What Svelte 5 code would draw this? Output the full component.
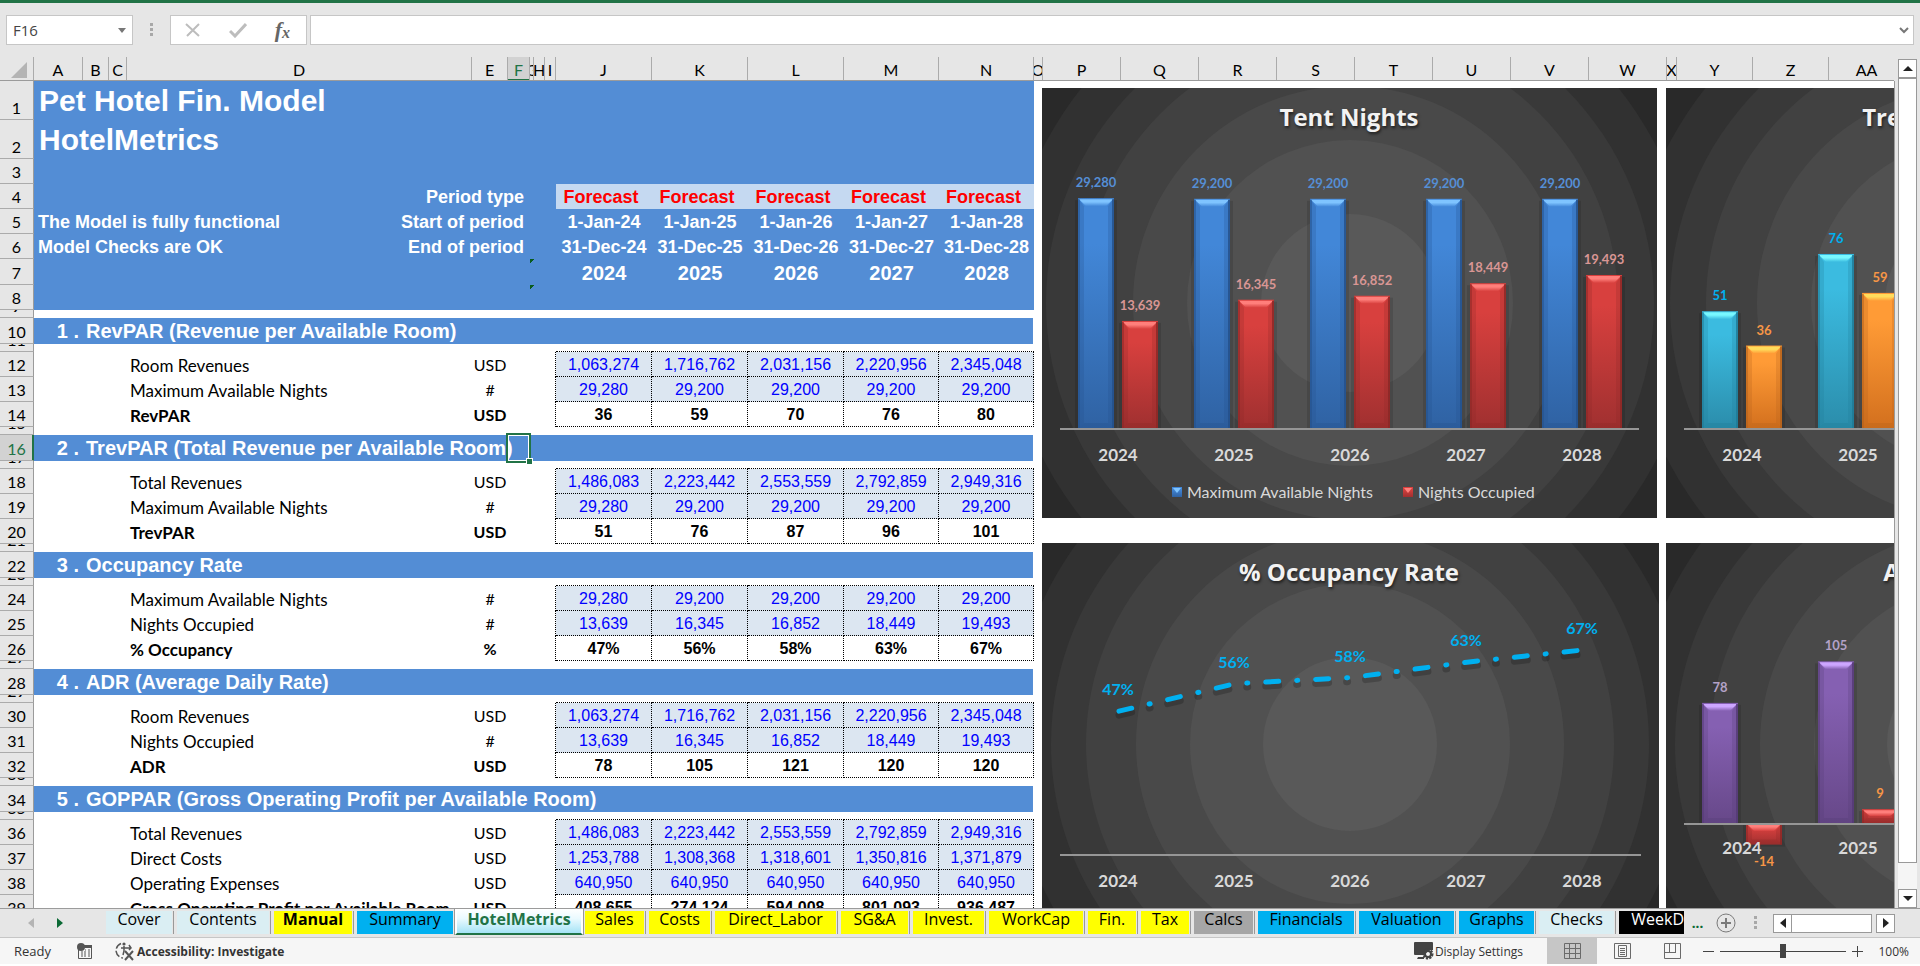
<script lang="ts">
    type Row = {
        n: number;
        kind: 'title' | 'plain' | 'year' | 'gap' | 'section' | 'line';
        label?: string;
        right?: string;
        unit?: string;
        values?: string[];
        style?: string;
        no?: number;
        flag?: boolean;
    };

    const columns: [string, number][] = [
        ['A', 49], ['B', 26], ['C', 18], ['D', 345], ['E', 36], ['F', 22], ['G', 4], ['H', 11], ['I', 11],
        ['J', 96], ['K', 96], ['L', 96], ['M', 95], ['N', 95], ['O', 9],
        ['P', 78], ['Q', 78], ['R', 78], ['S', 78], ['T', 78], ['U', 78], ['V', 78], ['W', 78],
        ['X', 10], ['Y', 76], ['Z', 76], ['AA', 76],
    ];

    const years = ['2024', '2025', '2026', '2027', '2028'];
    const totalRevenues = ['1,486,083', '2,223,442', '2,553,559', '2,792,859', '2,949,316'];
    const roomRevenues = ['1,063,274', '1,716,762', '2,031,156', '2,220,956', '2,345,048'];
    const available = ['29,280', '29,200', '29,200', '29,200', '29,200'];
    const occupied = ['13,639', '16,345', '16,852', '18,449', '19,493'];

    const sections = [
        {
            title: 'RevPAR (Revenue per Available Room)',
            lines: [
                ['Room Revenues', 'USD', roomRevenues],
                ['Maximum Available Nights', '#', available],
                ['RevPAR', 'USD', ['36', '59', '70', '76', '80']],
            ],
        },
        {
            title: 'TrevPAR (Total Revenue per Available Room)',
            lines: [
                ['Total Revenues', 'USD', totalRevenues],
                ['Maximum Available Nights', '#', available],
                ['TrevPAR', 'USD', ['51', '76', '87', '96', '101']],
            ],
        },
        {
            title: 'Occupancy Rate',
            lines: [
                ['Maximum Available Nights', '#', available],
                ['Nights Occupied', '#', occupied],
                ['% Occupancy', '%', ['47%', '56%', '58%', '63%', '67%']],
            ],
        },
        {
            title: 'ADR (Average Daily Rate)',
            lines: [
                ['Room Revenues', 'USD', roomRevenues],
                ['Nights Occupied', '#', occupied],
                ['ADR', 'USD', ['78', '105', '121', '120', '120']],
            ],
        },
        {
            title: 'GOPPAR (Gross Operating Profit per Available Room)',
            lines: [
                ['Total Revenues', 'USD', totalRevenues],
                ['Direct Costs', 'USD', ['1,253,788', '1,308,368', '1,318,601', '1,350,816', '1,371,879']],
                ['Operating Expenses', 'USD', ['640,950', '640,950', '640,950', '640,950', '640,950']],
                ['Gross Operating Profit per Available Room', 'USD', ['408,655', '274,124', '594,008', '801,093', '936,487']],
            ],
        },
    ] as { title: string; lines: [string, string, string[]][] }[];

    const rows: Row[] = [
        { n: 1, kind: 'title', label: 'Pet Hotel Fin. Model' },
        { n: 2, kind: 'title', label: 'HotelMetrics' },
        { n: 3, kind: 'plain' },
        { n: 4, kind: 'plain', right: 'Period type', values: Array(5).fill('Forecast'), style: 'forecast' },
        { n: 5, kind: 'plain', label: 'The Model is fully functional', right: 'Start of period', values: years.map((y) => '1-Jan-' + y.slice(2)) },
        { n: 6, kind: 'plain', label: 'Model Checks are OK', right: 'End of period', values: years.map((y) => '31-Dec-' + y.slice(2)) },
        { n: 7, kind: 'year', values: years, flag: true },
        { n: 8, kind: 'plain', flag: true },
        { n: 9, kind: 'gap' },
    ];

    let n = 10;
    sections.forEach((s, i) => {
        rows.push({ n: n++, kind: 'section', no: i + 1, label: s.title });
        rows.push({ n: n++, kind: 'gap', style: 'above' });
        s.lines.forEach(([label, unit, values], k) => {
            const total = k === s.lines.length - 1;
            rows.push({ n: n++, kind: 'line', label, unit, values, style: total ? 'total' : 'input' });
        });
        // the last section runs on below the window
        if (i < sections.length - 1) rows.push({ n: n++, kind: 'gap' });
    });

    // charts
    const palette = {
        blue: { hi: '#7fc4ff', top: '#4287d8', bottom: '#2f62a3', edge: '#24508a', text: '#558ed5' },
        red: { hi: '#ff7f7b', top: '#d8403e', bottom: '#a03030', edge: '#8a2826', text: '#d99694' },
        cyan: { hi: '#78f8ff', top: '#3bbbe0', bottom: '#2b8dab', edge: '#1f7a96', text: '#00b0f0' },
        orange: { hi: '#ffdc5c', top: '#ff9b36', bottom: '#d3701e', edge: '#b3611c', text: '#f79646' },
        purple: { hi: '#cda6ff', top: '#8560b2', bottom: '#674889', edge: '#543a75', text: '#b3a2c7' },
    };
    type Tone = keyof typeof palette;
    const shades = ['#313131', '#393939', '#414141', '#494949', '#515151', '#595959'];
    const num = (s: string) => parseFloat(s.replace(/,/g, ''));

    type Chart = {
        id: string; title: string; w: number; h: number; cy: number; base: number; scale: number; cat: number;
        rings: number[]; series: { tone: Tone; labelTone?: Tone; name: string; values: string[] }[]; legend?: boolean; line?: boolean;
    };
    const wide = [344, 304, 268, 217, 163, 89];
    const low = [339, 299, 264, 214, 160, 87];
    const charts: Chart[] = [
        {
            id: 'nights', title: 'Tent Nights', w: 615, h: 430, cy: 215, base: 340, scale: 0.00785, cat: 373, rings: wide, legend: true,
            series: [
                { tone: 'blue', name: 'Maximum Available Nights', values: available },
                { tone: 'red', name: 'Nights Occupied', values: occupied },
            ],
        },
        {
            id: 'trevpar', title: 'TrevPAR & RevPAR', w: 615, h: 430, cy: 215, base: 340, scale: 2.29, cat: 373, rings: wide,
            series: [
                { tone: 'cyan', name: 'TrevPAR', values: ['51', '76', '87', '96', '101'] },
                { tone: 'orange', name: 'RevPAR', values: ['36', '59', '70', '76', '80'] },
            ],
        },
        {
            id: 'occupancy', title: '% Occupancy Rate', w: 617, h: 403, cy: 201, base: 312, scale: 3.06, cat: 344, rings: low, line: true,
            series: [{ tone: 'cyan', name: '% Occupancy', values: ['47%', '56%', '58%', '63%', '67%'] }],
        },
        {
            id: 'adr', title: 'ADR & GOPPAR', w: 617, h: 403, cy: 201, base: 280, scale: 1.54, cat: 311, rings: low,
            series: [
                { tone: 'purple', name: 'ADR', values: ['78', '105', '121', '120', '120'] },
                { tone: 'red', labelTone: 'orange', name: 'GOPPAR', values: ['-14', '9', '20', '27', '32'] },
            ],
        },
    ];

    const tabs: [string, number, string][] = [
        ['Cover', 66, 'pale'], ['Contents', 92, 'pale'], ['Manual', 78, 'yellow strong'], ['Summary', 96, 'sky'],
        ['HotelMetrics', 128, 'active'], ['Sales', 59, 'yellow'], ['Costs', 61, 'yellow'], ['Direct_Labor', 121, 'yellow'],
        ['SG&A', 67, 'yellow'], ['Invest.', 71, 'yellow'], ['WorkCap', 94, 'yellow'], ['Fin.', 48, 'yellow'],
        ['Tax', 48, 'yellow'], ['Calcs', 59, 'gray'], ['Financials', 96, 'sky'], ['Valuation', 95, 'sky'],
        ['Graphs', 75, 'sky'], ['Checks', 75, 'pale'], ['WeekD', 65, 'black'],
    ];

    let zoom = 50;
</script>

{#snippet bar(tone: Tone, x: number, y: number, h: number)}
    {@const c = palette[tone]}
    {@const b = Math.min(8, h / 2)}
    <rect x={x - 3} y={y + 2} width="42" height={h} fill="#000" opacity="0.12" />
    <rect {x} {y} width="36" height={h} fill="url(#fill-{tone})" />
    <polygon points="{x},{y} {x + 6},{y + b} {x + 6},{y + h - 5} {x},{y + h}" fill={c.edge} opacity="0.25" />
    <polygon points="{x + 36},{y} {x + 30},{y + b} {x + 30},{y + h - 5} {x + 36},{y + h}" fill={c.edge} opacity="0.25" />
    <polygon points="{x},{y + h} {x + 6},{y + h - 5} {x + 30},{y + h - 5} {x + 36},{y + h}" fill={c.edge} opacity="0.3" />
    <polygon points="{x + 1},{y + 1} {x + 35},{y + 1} {x + 28},{y + b} {x + 8},{y + b}" fill="url(#hi-{tone})" />
    <path d="M{x + 1} {y + 1}V{y + h}" stroke={c.edge} stroke-width="2" opacity="0.5" />
    <path d="M{x + 35} {y + 1}V{y + h}" stroke={c.edge} stroke-width="2" opacity="0.8" />
{/snippet}

{#snippet plot(c: Chart)}
    <svg class="chart" width={c.w} height={c.h} viewBox="0 0 {c.w} {c.h}" role="img" aria-label={c.title}>
        <rect width={c.w} height={c.h} fill="#292929" />
        {#each c.rings as r, i}
            <circle cx={308} cy={c.cy} {r} fill={shades[i]} />
        {/each}
        <text class="chart-title" x="307" y="38">{c.title}</text>
        {#if c.line}
            {@const points = c.series[0].values.map((v, i) => `${77 + i * 116},${c.base - num(v) * c.scale}`).join(' ')}
            <path d="M18 {c.base}H599" stroke="#969696" stroke-width="2" />
            <polyline {points} class="trend shadow" />
            <polyline {points} class="trend" />
            {#each c.series[0].values as v, i}
                <text class="percent" x={76 + i * 116} y={c.base - num(v) * c.scale - 16}>{v}</text>
            {/each}
        {:else}
            {#each c.series as s, k}
                {#each s.values as v, i}
                    {@const size = Math.abs(num(v) * c.scale)}
                    {@render bar(s.tone, 36 + k * 44 + i * 116, num(v) < 0 ? c.base : c.base - size, size)}
                {/each}
            {/each}
            <path d="M18 {c.base + 1}H597" stroke="#969696" stroke-width="2" />
            {#each c.series as s, k}
                {#each s.values as v, i}
                    {@const value = num(v)}
                    <text
                        class="value"
                        x={54 + k * 44 + i * 116}
                        y={value < 0 ? c.base - value * c.scale + 21 : c.base - value * c.scale - 11}
                        fill={palette[s.labelTone ?? s.tone].text}>{v}</text>
                {/each}
            {/each}
        {/if}
        {#each years as year, i}
            <text class="category" x={76 + i * 116} y={c.cat}>{year}</text>
        {/each}
        {#if c.legend}
            {#each c.series as s, k}
                {@const x = k ? 361 : 130}
                <rect {x} y="399" width="10" height="10" fill="url(#fill-{s.tone})" />
                <polygon points="{x + 1},400 {x + 9},400 {x + 5},405" fill={palette[s.tone].hi} />
                <text class="legend" x={x + 15} y="410">{s.name}</text>
            {/each}
        {/if}
    </svg>
{/snippet}

<svg class="defs" width="0" height="0" aria-hidden="true">
    <defs>
        {#each Object.entries(palette) as [name, c]}
            <linearGradient id="fill-{name}" x1="0" y1="0" x2="0" y2="1">
                <stop offset="0.2" stop-color={c.top} />
                <stop offset="1" stop-color={c.bottom} />
            </linearGradient>
            <linearGradient id="hi-{name}" x1="0" y1="0" x2="0" y2="1">
                <stop offset="0.4" stop-color={c.hi} />
                <stop offset="1" stop-color={c.top} />
            </linearGradient>
        {/each}
    </defs>
</svg>

<div class="window">
    <div class="formula-bar">
        <div class="name-box">
            <input type="text" value="F16" aria-label="Name box" />
            <button type="button" aria-label="Show names">
                <svg width="8" height="5" viewBox="0 0 8 5"><path d="M0 0h8L4 5z" fill="#777" /></svg>
            </button>
        </div>
        <svg class="grip" width="4" height="14" viewBox="0 0 4 14"><path d="M0 0h3v3H0zM0 5h3v3H0zM0 10h3v3H0z" fill="#a8a8a8" /></svg>
        <div class="actions">
            <button type="button" aria-label="Cancel">
                <svg width="16" height="16" viewBox="0 0 16 16"><path d="M1 2l13 12M14 2L2 14" stroke="#bdbdbd" stroke-width="2" fill="none" /></svg>
            </button>
            <button type="button" aria-label="Enter">
                <svg width="18" height="16" viewBox="0 0 18 16"><path d="M1 9l5 5L17 2" stroke="#bdbdbd" stroke-width="3" fill="none" /></svg>
            </button>
            <button type="button" class="fx" aria-label="Insert function">f<small>x</small></button>
        </div>
        <div class="formula">
            <input type="text" value="" aria-label="Formula" />
            <button type="button" aria-label="Expand formula bar">
                <svg width="10" height="7" viewBox="0 0 10 7"><path d="M1 1l4 4 4-4" stroke="#777" stroke-width="2" fill="none" /></svg>
            </button>
        </div>
    </div>

    <div class="main">
        <div class="sheet">
            <div class="col-heads">
                <button type="button" class="corner" aria-label="Select all">
                    <svg width="16" height="16" viewBox="0 0 16 16"><path d="M16 0v16H0z" fill="#b4b4b4" /></svg>
                </button>
                {#each columns as [name, width]}
                    <div class="col-head" class:selected={name === 'F'} style="width: {width}px">{name}</div>
                {/each}
            </div>
            <div class="body">
                <table>
                    <colgroup>
                        <col style="width: 34px" />
                        {#each columns.slice(0, 14) as [, width]}
                            <col style="width: {width}px" />
                        {/each}
                        <col style="width: 8px" />
                    </colgroup>
                    <tbody>
                        {#each rows as row}
                            <tr class="{row.kind} {row.style ?? ''}" class:band={row.n < 9}>
                                <th scope="row" class:selected={row.n === 16}><div class="num">{row.n}</div></th>
                                {#if row.kind === 'section'}
                                    <td class="no">{row.no} .</td>
                                    <td colspan="4" class="section-title">{row.label}</td>
                                    <td class:cursor={row.n === 16}></td>
                                    <td colspan="8"></td>
                                {:else if row.kind === 'line'}
                                    <td colspan="3"></td>
                                    <td class="label">{row.label}</td>
                                    <td class="unit">{row.unit}</td>
                                    <td colspan="3"></td>
                                    <td class="edge"></td>
                                    {#each row.values ?? [] as value}
                                        <td class="cell">{value}</td>
                                    {/each}
                                {:else if row.kind === 'gap'}
                                    <td colspan="9"></td>
                                    {#each years as _}
                                        <td class="cell"></td>
                                    {/each}
                                {:else}
                                    <td colspan="3" class="heading">{row.label ?? ''}</td>
                                    <td colspan="3" class="right">{row.right ?? ''}</td>
                                    <td class:flag={row.flag}></td>
                                    <td colspan="2"></td>
                                    {#each row.values ?? years as value}
                                        <td class="head-cell">{row.values ? value : ''}</td>
                                    {/each}
                                {/if}
                                <td class="blank"></td>
                            </tr>
                        {/each}
                    </tbody>
                </table>
                <div class="charts">
                    {#each charts as c}
                        {@render plot(c)}
                    {/each}
                </div>
            </div>
        </div>
        <div class="v-scroll">
            <button type="button" aria-label="Scroll up"><svg width="10" height="6" viewBox="0 0 10 6"><path d="M0 5h10L5 0z" fill="#222" /></svg></button>
            <div class="v-thumb"></div>
            <div class="v-track"></div>
            <button type="button" aria-label="Scroll down"><svg width="10" height="6" viewBox="0 0 10 6"><path d="M0 0h10L5 5z" fill="#222" /></svg></button>
        </div>
    </div>

    <div class="tab-bar">
        <div class="tab-nav">
            <button type="button" aria-label="Previous sheet"><svg width="6" height="10" viewBox="0 0 6 10"><path d="M6 0v10L0 5z" fill="#b4b4b4" /></svg></button>
            <button type="button" aria-label="Next sheet"><svg width="6" height="10" viewBox="0 0 6 10"><path d="M0 0v10l6-5z" fill="#0b6a35" /></svg></button>
        </div>
        <div class="tabs">
            {#each tabs as [name, width, tone]}
                <button type="button" class="tab {tone}" style="width: {width}px">{name}</button>
            {/each}
        </div>
        <span class="more">...</span>
        <button type="button" class="add" aria-label="New sheet">
            <svg width="22" height="22" viewBox="0 0 22 22"><circle cx="11" cy="11" r="9" fill="none" stroke="#7a7a7a" /><path d="M11 6v10M6 11h10" stroke="#7a7a7a" stroke-width="2" /></svg>
        </button>
        <svg class="tab-grip" width="4" height="14" viewBox="0 0 4 14"><path d="M0 0h3v3H0zM0 5h3v3H0zM0 10h3v3H0z" fill="#a8a8a8" /></svg>
        <div class="h-scroll">
            <button type="button" aria-label="Scroll left"><svg width="6" height="10" viewBox="0 0 6 10"><path d="M6 0v10L0 5z" fill="#222" /></svg></button>
            <div class="h-thumb"></div>
            <button type="button" aria-label="Scroll right"><svg width="6" height="10" viewBox="0 0 6 10"><path d="M0 0v10l6-5z" fill="#222" /></svg></button>
        </div>
    </div>

    <div class="status">
        <span class="ready">Ready</span>
        <svg class="macro" width="16" height="16" viewBox="0 0 16 16">
            <path d="M1.500 4v11.500h13v-12H7" fill="none" stroke="#555" /><path d="M6 2h9v3H6z" fill="#555" /><circle cx="4" cy="4" r="4" fill="#555" />
            <path d="M4 9h2M7 9h2M11 9h2M4 11h2M7 11h2M11 11h2M4 13h2M7 13h2M11 13h2M8 7h1M11 7h2" stroke="#555" />
        </svg>
        <button type="button" class="access">
            <svg width="20" height="20" viewBox="0 0 20 20">
                <path d="M6 2.500A7.500 7.500 0 0 0 8 17" fill="none" stroke="#555" stroke-width="1.500" stroke-dasharray="7 2" />
                <circle cx="9" cy="3" r="1.600" fill="#555" />
                <path d="M6 7h10M9 5v5l-1 4M14 4l2 3-2 2" fill="none" stroke="#555" stroke-width="1.500" />
                <path d="M10 10l8 9M18 10l-8 9" fill="none" stroke="#555" stroke-width="2" />
            </svg>
            Accessibility: Investigate
        </button>
        <span class="spacer"></span>
        <button type="button" class="display">
            <svg width="20" height="18" viewBox="0 0 20 18">
                <path d="M1 0h17a1 1 0 0 1 1 1v7h-4l-5 5H1a1 1 0 0 1-1-1V1a1 1 0 0 1 1-1zM4 15h6v2H3z" fill="#444" />
                <circle cx="14" cy="12" r="4" fill="none" stroke="#444" stroke-width="3" stroke-dasharray="2 1" /><circle cx="14" cy="12" r="3" fill="none" stroke="#444" stroke-width="2" />
            </svg>
            Display Settings
        </button>
        <button type="button" class="view on" aria-label="Normal">
            <svg width="17" height="16" viewBox="0 0 17 16"><path d="M.5.500h16v15H.5zM.5 5.500h16M.5 10.500h16M5.500 0v16M11.500 0v16" fill="none" stroke="#6a6a6a" /></svg>
        </button>
        <button type="button" class="view" aria-label="Page layout">
            <svg width="17" height="16" viewBox="0 0 17 16"><path d="M.5.500h16v15H.5zM4.500 2.500h8v11h-8zM6 5.500h5M6 7.500h5M6 9.500h5M6 11.500h5" fill="none" stroke="#6a6a6a" /></svg>
        </button>
        <button type="button" class="view" aria-label="Page break preview">
            <svg width="17" height="16" viewBox="0 0 17 16"><path d="M.5.500h16v15H.5zM5.500 0v9.500M11.500 0v9.500M0 9.500h12" fill="none" stroke="#6a6a6a" /></svg>
        </button>
        <button type="button" class="step" aria-label="Zoom out"><svg width="11" height="11" viewBox="0 0 11 11"><path d="M0 5.500h11" stroke="#444" /></svg></button>
        <input type="range" min="0" max="100" bind:value={zoom} aria-label="Zoom" />
        <button type="button" class="step" aria-label="Zoom in"><svg width="11" height="11" viewBox="0 0 11 11"><path d="M0 5.500h11M5.500 0v11" stroke="#444" /></svg></button>
        <span class="percent-text">100%</span>
    </div>
</div>

<style>
    :global(body) {
        margin: 0;
        background: #fff;
        overflow: hidden;
    }

    .defs {
        position: absolute;
    }

    button,
    input {
        font: inherit;
        color: inherit;
        padding: 0;
        margin: 0;
        border: 0;
        background: none;
        border-radius: 0;
    }

    button {
        display: flex;
        align-items: center;
        justify-content: center;
    }

    svg {
        display: block;
        flex: none;
    }

    .window {
        height: 100vh;
        box-sizing: border-box;
        padding-bottom: 2px;
        display: flex;
        flex-direction: column;
        font-family: Lato, Carlito, sans-serif;
        font-size: 16px;
        color: #000;
    }

    /* formula bar */
    .formula-bar {
        display: flex;
        align-items: flex-start;
        height: 57px;
        box-sizing: border-box;
        padding: 12px 6px 0;
        border-top: 3px solid #217346;
        background: #e6e6e6;
        flex: none;
    }

    .name-box,
    .actions,
    .formula {
        display: flex;
        align-items: center;
        box-sizing: border-box;
        height: 30px;
        background: #fff;
        border: 1px solid #c6c6c6;
    }

    .name-box {
        width: 127px;
        padding: 0 6px;
    }

    .name-box input {
        flex: 1;
        min-width: 0;
        color: #444;
        font-family: 'Open Sans', sans-serif;
        font-size: 15px;
    }

    .grip {
        margin: 8px 16px 0 17px;
    }

    .actions {
        width: 137px;
        justify-content: space-between;
        padding: 0 16px 0 14px;
    }

    .fx {
        font-family: 'Liberation Serif', serif;
        font-style: italic;
        font-weight: bold;
        font-size: 22px;
        line-height: 24px;
        color: #666;
    }

    .fx small {
        font-size: 16px;
        padding-top: 5px;
    }

    .formula {
        flex: 1;
        margin-left: 3px;
        padding-right: 4px;
    }

    .formula input {
        flex: 1;
        min-width: 0;
    }

    /* sheet */
    .main {
        flex: 1;
        min-height: 0;
        display: flex;
        background: #e6e6e6;
    }

    .sheet {
        flex: 1;
        min-width: 0;
        overflow: hidden;
        display: flex;
        flex-direction: column;
    }

    .col-heads {
        display: flex;
        height: 24px;
        box-sizing: border-box;
        border-bottom: 1px solid #9b9b9b;
        flex: none;
        margin-right: 1px;
    }

    .corner {
        width: 34px;
        flex: none;
        padding: 3px 3px 0 8px;
        box-sizing: border-box;
        border-right: 1px solid #ababab;
    }

    .col-head {
        flex: none;
        box-sizing: border-box;
        display: flex;
        justify-content: center;
        overflow: hidden;
        line-height: 25px;
        border-right: 1px solid #ababab;
    }

    .col-head.selected {
        background: #d2d2d2;
        color: #217346;
        box-shadow: inset 0 -1px 0 #217346;
    }

    .body {
        flex: 1;
        min-height: 0;
        display: flex;
        overflow: hidden;
        background: #fff;
        border-right: 1px solid #9b9b9b;
    }

    table {
        table-layout: fixed;
        width: 1042px;
        flex: none;
        border-collapse: separate;
        border-spacing: 0;
        align-self: flex-start;
    }

    td,
    th {
        padding: 0;
        box-sizing: border-box;
        vertical-align: bottom;
        white-space: nowrap;
        line-height: 18px;
        font-weight: normal;
    }

    tr {
        height: 25px;
    }

    .title {
        height: 39px;
    }

    .year,
    .section {
        height: 26px;
    }

    .gap {
        height: 8px;
    }

    th {
        background: #e6e6e6;
        border-right: 1px solid #9b9b9b;
        border-bottom: 1px solid #ababab;
    }

    .num {
        padding-bottom: 2px;
    }

    .gap .num {
        box-sizing: border-box;
        height: 7px;
        display: flex;
        align-items: flex-end;
        justify-content: center;
        overflow: hidden;
    }

    th.selected {
        background: #d2d2d2;
        color: #217346;
        border-right-color: #217346;
        box-shadow: inset -1px 0 0 #217346;
    }

    .band td:not(.blank) {
        background: #538dd5;
        color: #fff;
    }

    .section td {
        color: #fff;
        font: bold 20px/22px 'Liberation Sans', Arial, sans-serif;
        padding-bottom: 2px;
    }

    .section {
        background: linear-gradient(#538dd5, #538dd5) no-repeat 0 0 / 1033px 100%;
    }

    .section .no {
        text-align: right;
        padding-right: 4px;
    }

    .section .section-title {
        padding-left: 3px;
    }

    .heading,
    .right,
    .head-cell {
        font: bold 18px/20px 'Liberation Sans', Arial, sans-serif;
        padding-bottom: 2px;
    }

    .title .heading {
        font-size: 30px;
        line-height: 34px;
    }

    .heading {
        padding-left: 4px;
    }

    .title .heading {
        padding-left: 5px;
    }

    .right {
        text-align: right;
        padding-right: 6px;
    }

    .head-cell {
        text-align: center;
    }

    .year .head-cell {
        font-size: 20px;
    }

    .forecast td.head-cell:not(.blank) {
        background: #c5d9f1;
        color: #f00;
        padding-right: 6px;
    }

    .flag {
        background-image: linear-gradient(135deg, #0a5c1e 3px, transparent 3px) !important;
    }

    .label {
        padding: 0 0 2px 3px;
        font-size: 17px;
    }

    .unit {
        text-align: center;
        padding-bottom: 3px;
    }

    .total .label,
    .total .unit {
        font-weight: bold;
    }

    .line .cell {
        text-align: center;
        font: 16px/18px 'Liberation Sans', Arial, sans-serif;
        padding-bottom: 2px;
        border-right: 1px dotted #000;
        border-bottom: 1px dotted #000;
    }

    .input .cell {
        background: #dce6f1;
        color: #00f;
    }

    .total .cell {
        font-weight: bold;
    }

    .line .edge {
        border-right: 1px dotted #000;
    }

    .above .cell {
        border-bottom: 1px dotted #000;
    }

    .cursor {
        position: relative;
    }

    .cursor::after {
        content: '';
        position: absolute;
        inset: -2px -1px -2px -2px;
        border: 2px solid #217346;
        box-shadow: inset 0 0 0 1px #fff;
    }

    .cursor::before {
        content: '';
        position: absolute;
        z-index: 1;
        right: -2px;
        bottom: -3px;
        width: 5px;
        height: 5px;
        background: #217346;
        outline: 1px solid #fff;
    }

    /* charts */
    .charts {
        display: grid;
        grid-template-columns: 624px 624px;
        gap: 25px 0;
        padding-top: 7px;
        align-content: start;
        flex: 1;
        min-width: 0;
    }

    .chart-title {
        font: bold 24px 'Open Sans', sans-serif;
        fill: #f2f2f2;
        text-anchor: middle;
        text-shadow: 1px 2px 3px rgba(0, 0, 0, 0.6);
    }

    .value,
    .percent,
    .category {
        font: bold 13px Lato, sans-serif;
        text-anchor: middle;
    }

    .category {
        font-size: 17px;
        fill: #d9d9d9;
    }

    .percent {
        font-size: 16px;
        fill: #00b0f0;
    }

    .legend {
        font: 16px Lato, sans-serif;
        fill: #d9d9d9;
    }

    .trend {
        fill: none;
        stroke: #00b0f0;
        stroke-width: 5px;
        stroke-linecap: round;
        stroke-dasharray: 13 18 1 18;
    }

    .trend.shadow {
        stroke: #000;
        opacity: 0.2;
        stroke-width: 7px;
        transform: translateY(4px);
    }

    /* scroll bars */
    .v-scroll {
        width: 25px;
        flex: none;
        box-sizing: border-box;
        padding: 2px 3px 0;
        display: flex;
        flex-direction: column;
    }

    .v-scroll button,
    .v-thumb,
    .h-scroll button,
    .h-thumb {
        box-sizing: border-box;
        background: #fff;
        border: 1px solid #999;
    }

    .v-scroll button {
        height: 19px;
        flex: none;
    }

    .v-thumb {
        flex: 1;
    }

    .v-track {
        height: 26px;
        background: #f5f5f5;
    }

    /* sheet tabs */
    .tab-bar {
        height: 29px;
        flex: none;
        box-sizing: border-box;
        border-top: 1px solid #9b9b9b;
        background: #e6e6e6;
        display: flex;
        align-items: center;
        padding-right: 25px;
    }

    .tab-nav {
        display: flex;
        width: 103px;
        flex: none;
        gap: 23px;
        padding-left: 28px;
        box-sizing: border-box;
    }

    .tabs {
        display: flex;
        align-items: flex-start;
        align-self: flex-start;
        overflow: hidden;
        gap: 5px;
        padding-left: 3px;
        height: 28px;
        flex: none;
    }

    .tab {
        box-sizing: border-box;
        flex: none;
        height: 23px;
        margin-top: 2px;
        font-family: 'Open Sans', sans-serif;
        font-size: 16px;
        line-height: 16px;
        align-items: flex-start;
        overflow: hidden;
        box-shadow: -3px 0 0 #e6e6e6, -4px 0 0 #999;
    }

    .pale {
        background: #daeef3;
    }

    .yellow {
        background: #ff0;
    }

    .strong {
        font-weight: bold;
    }

    .sky {
        background: #00b0f0;
    }

    .gray {
        background: #a6a6a6;
    }

    .black {
        background: #000;
        color: #fff;
        justify-content: flex-end;
    }

    .tab.active {
        height: 26px;
        margin: 0 -3px;
        padding-top: 2px;
        font-weight: bold;
        color: #217346;
        background: linear-gradient(#fff, #eafaff 40%, #a5e3f6);
        border: 2px solid #fff;
        border-top: 0;
        border-bottom: 2px solid #217346;
        box-shadow: -1px 0 0 #999, 1px 0 0 #999;
        z-index: 1;
    }

    .active + .tab {
        box-shadow: none;
    }

    .more {
        width: 27px;
        text-align: center;
        color: #0b6a35;
        font-weight: bold;
        line-height: 16px;
        padding-bottom: 2px;
    }

    .add {
        margin-left: 4px;
    }

    .tab-grip {
        margin: 0 15px 0 17px;
    }

    .h-scroll {
        display: flex;
        flex: 1;
        height: 19px;
    }

    .h-scroll button {
        width: 19px;
        flex: none;
    }

    .h-thumb {
        flex: 1;
        margin: 0 4px 0 -1px;
    }

    /* status bar */
    .status {
        height: 27px;
        flex: none;
        box-sizing: border-box;
        border-top: 1px solid #c6c6c6;
        background: #f6f6f6;
        display: flex;
        align-items: center;
        font-family: 'Open Sans', sans-serif;
        font-size: 13px;
        color: #333;
        padding: 0 11px 0 14px;
    }

    .macro {
        margin: 0 22px 0 26px;
    }

    .access {
        gap: 2px;
        font-weight: bold;
        font-size: 12px;
    }

    .spacer {
        flex: 1;
    }

    .display {
        gap: 1px;
        font-size: 12px;
        margin-right: 24px;
    }

    .view {
        width: 50px;
        height: 26px;
    }

    .view.on {
        background: #c6c6c6;
    }

    .step {
        width: 11px;
        margin: 0 6px;
    }

    input[type='range'] {
        appearance: none;
        width: 126px;
        height: 14px;
        background: linear-gradient(#444, #444) no-repeat center / 100% 1px;
    }

    input[type='range']::-webkit-slider-thumb {
        appearance: none;
        width: 6px;
        height: 14px;
        background: #444;
    }

    .percent-text {
        width: 40px;
        text-align: right;
        font-size: 12px;
    }
</style>
